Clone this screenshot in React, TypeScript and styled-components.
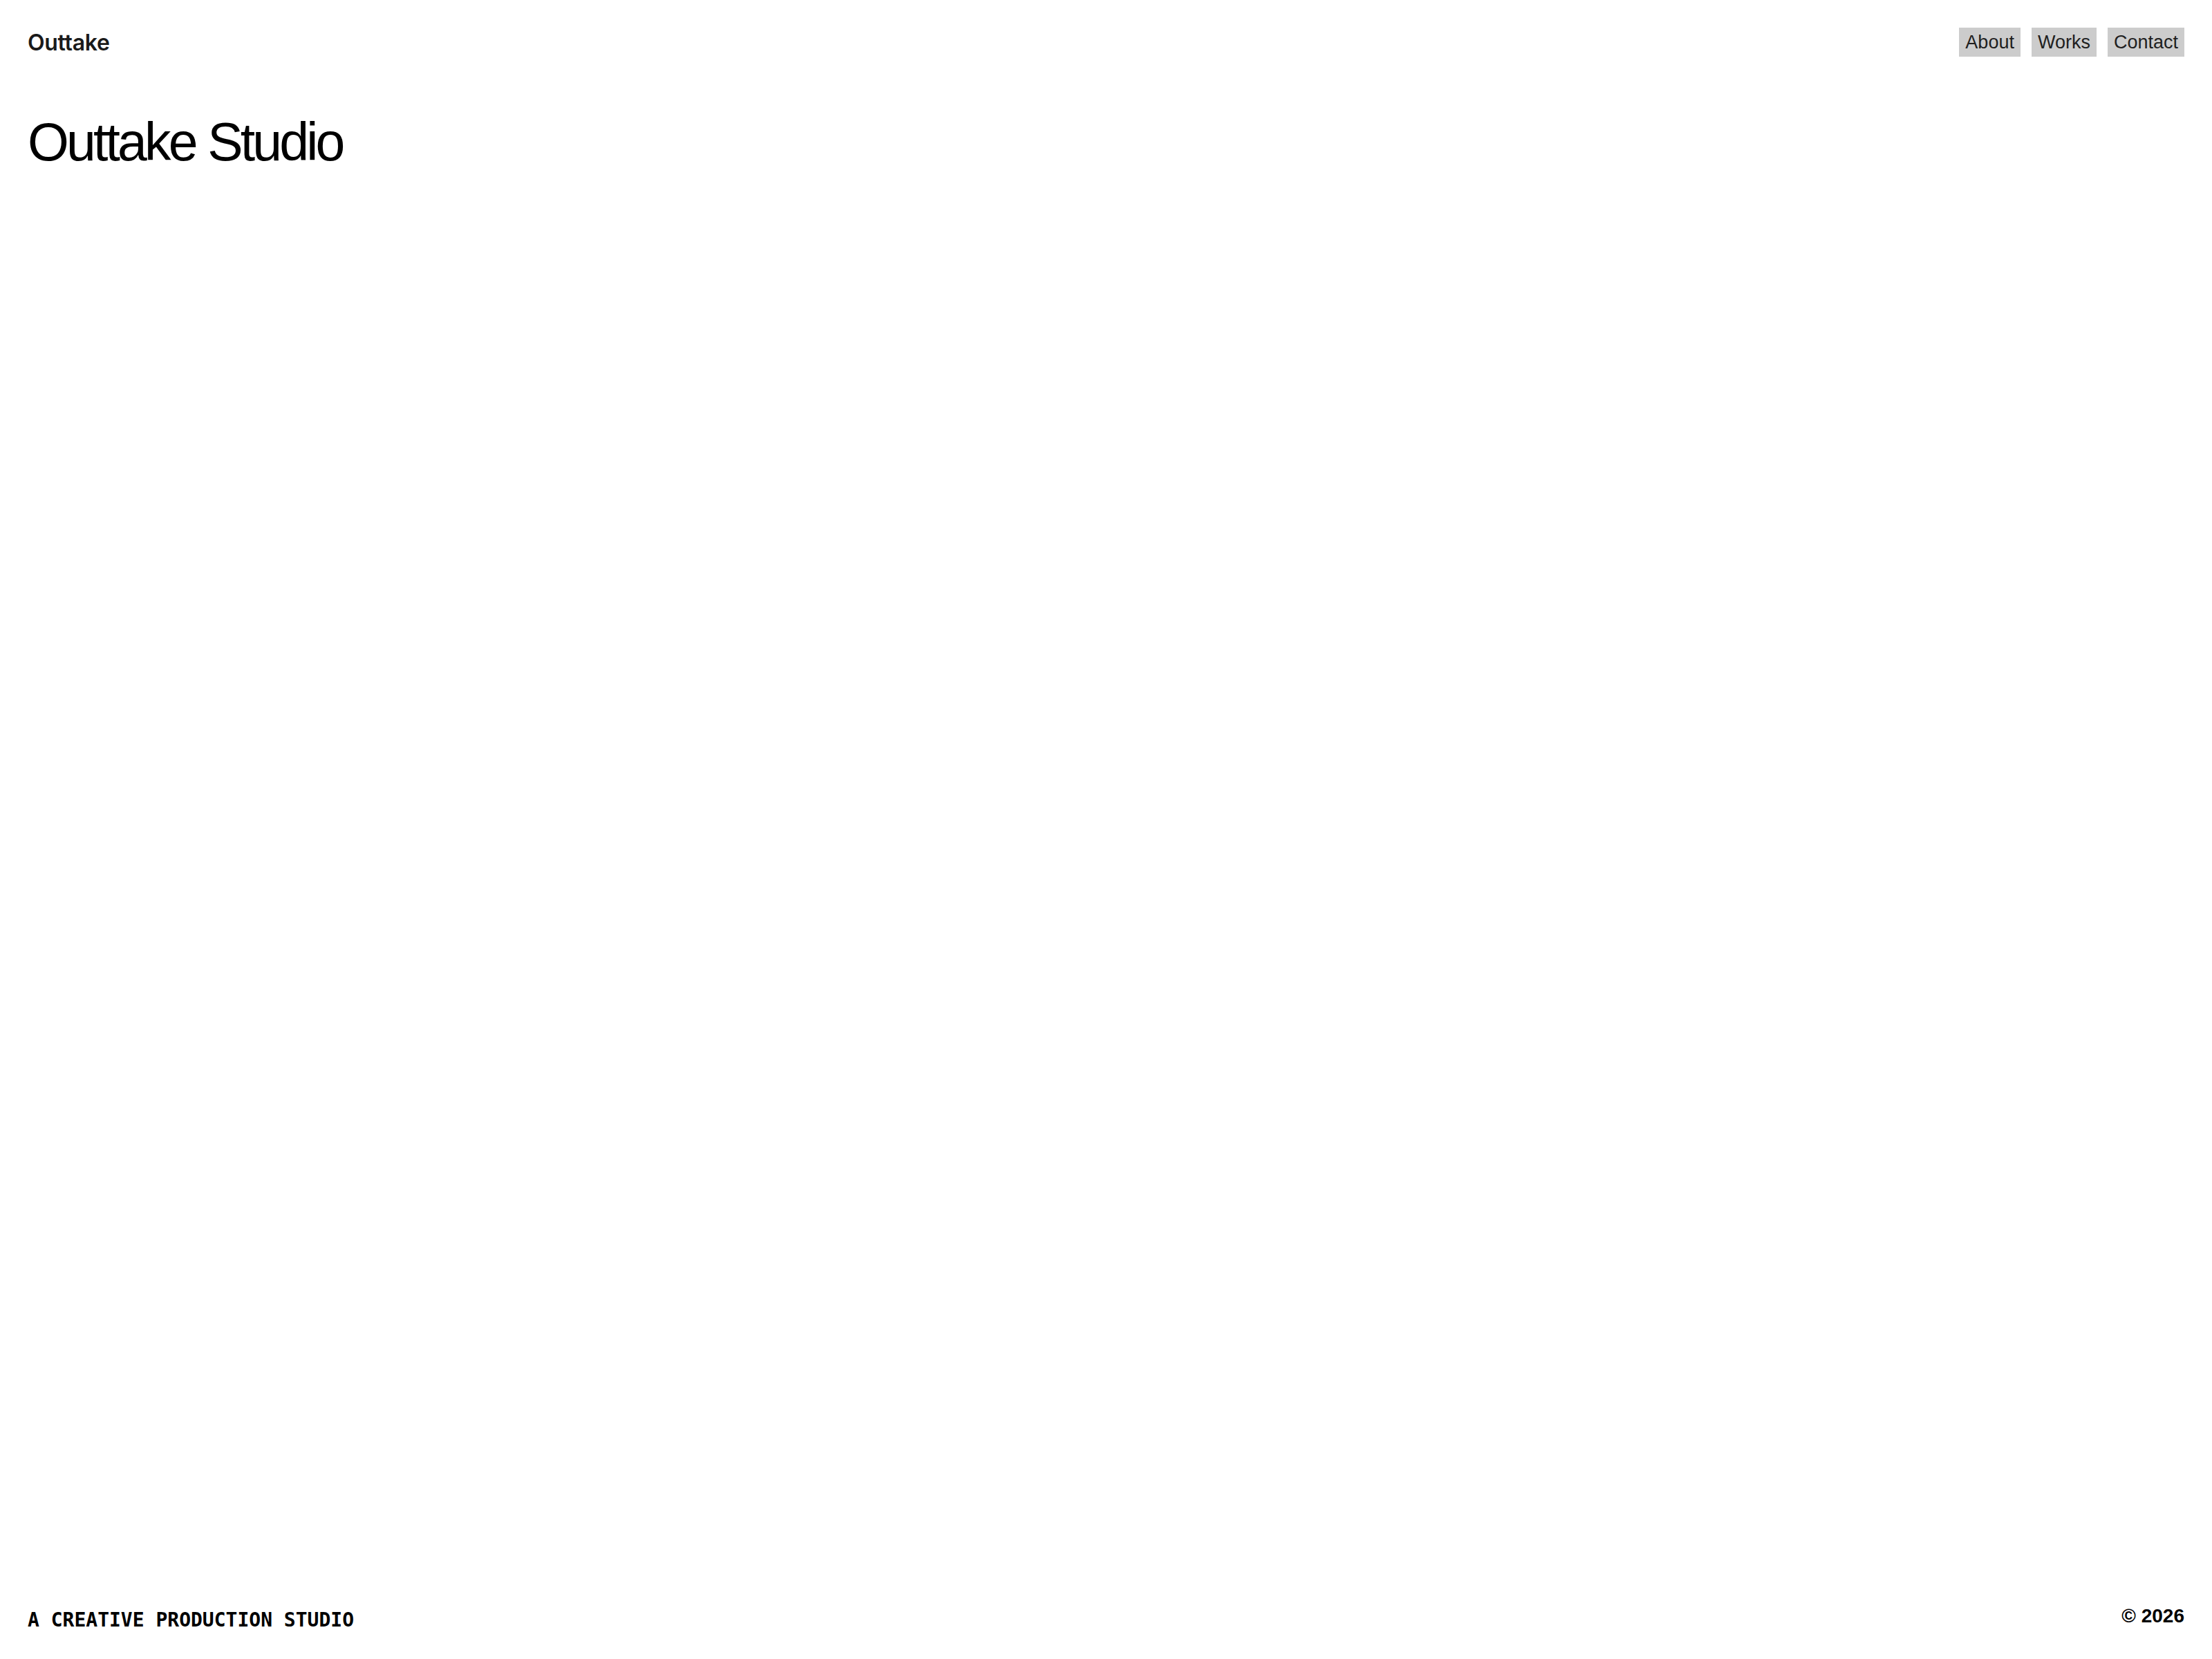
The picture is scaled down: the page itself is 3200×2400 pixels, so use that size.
import styled, { createGlobalStyle } from "styled-components";

const GlobalStyle = createGlobalStyle`
  html,
  body {
    margin: 0;
    padding: 0;
    background: #ffffff;
  }
  #root {
    min-height: 100vh;
  }
`;

const Page = styled.div`
  min-height: 100vh;
  display: flex;
  flex-direction: column;
  padding: 40px;
  box-sizing: border-box;
  color: #000;
  font-family: "Liberation Sans", Arial, sans-serif;
`;

const Header = styled.header`
  display: flex;
  justify-content: space-between;
  align-items: center;
  height: 42px;
`;

const Logo = styled.a`
  font-family: Inter, "Noto Sans", sans-serif;
  font-size: 32px;
  font-weight: 600;
  color: #1a1a1a;
  text-decoration: none;
  letter-spacing: -0.01em;
`;

const Nav = styled.nav`
  display: flex;
  gap: 16px;
`;

const NavLink = styled.a`
  display: block;
  padding: 0 9px 0 9px;
  background: #cccccc;
  color: #1f1f1f;
  font-size: 27px;
  line-height: 42px;
  text-decoration: none;
`;

const Title = styled.h1`
  margin: 85px 0 0;
  font-size: 77px;
  font-weight: 400;
  line-height: 1;
  letter-spacing: -0.05em;
  color: #000;
`;

const Spacer = styled.main`
  flex: 1;
`;

const Footer = styled.footer`
  display: flex;
  justify-content: space-between;
  align-items: flex-end;
`;

const Tagline = styled.p`
  margin: 0;
  font-family: "DejaVu Sans Mono", "Liberation Mono", monospace;
  font-weight: 700;
  font-size: 28px;
  color: #000;
`;

const Copyright = styled.p`
  margin: 0 0 6px;
  font-family: "Liberation Sans", Arial, sans-serif;
  font-weight: 700;
  font-size: 28px;
  color: #000;
`;

const links = ["About", "Works", "Contact"];

const App = () => {
  return (
    <>
      <GlobalStyle />
      <Page>
        <Header>
          <Logo href="#">Outtake</Logo>
          <Nav>
            {links.map((label) => (
              <NavLink key={label} href="#">
                {label}
              </NavLink>
            ))}
          </Nav>
        </Header>
        <Title>Outtake Studio</Title>
        <Spacer />
        <Footer>
          <Tagline>A CREATIVE PRODUCTION STUDIO</Tagline>
          <Copyright>© 2026</Copyright>
        </Footer>
      </Page>
    </>
  );
};

export default App;
